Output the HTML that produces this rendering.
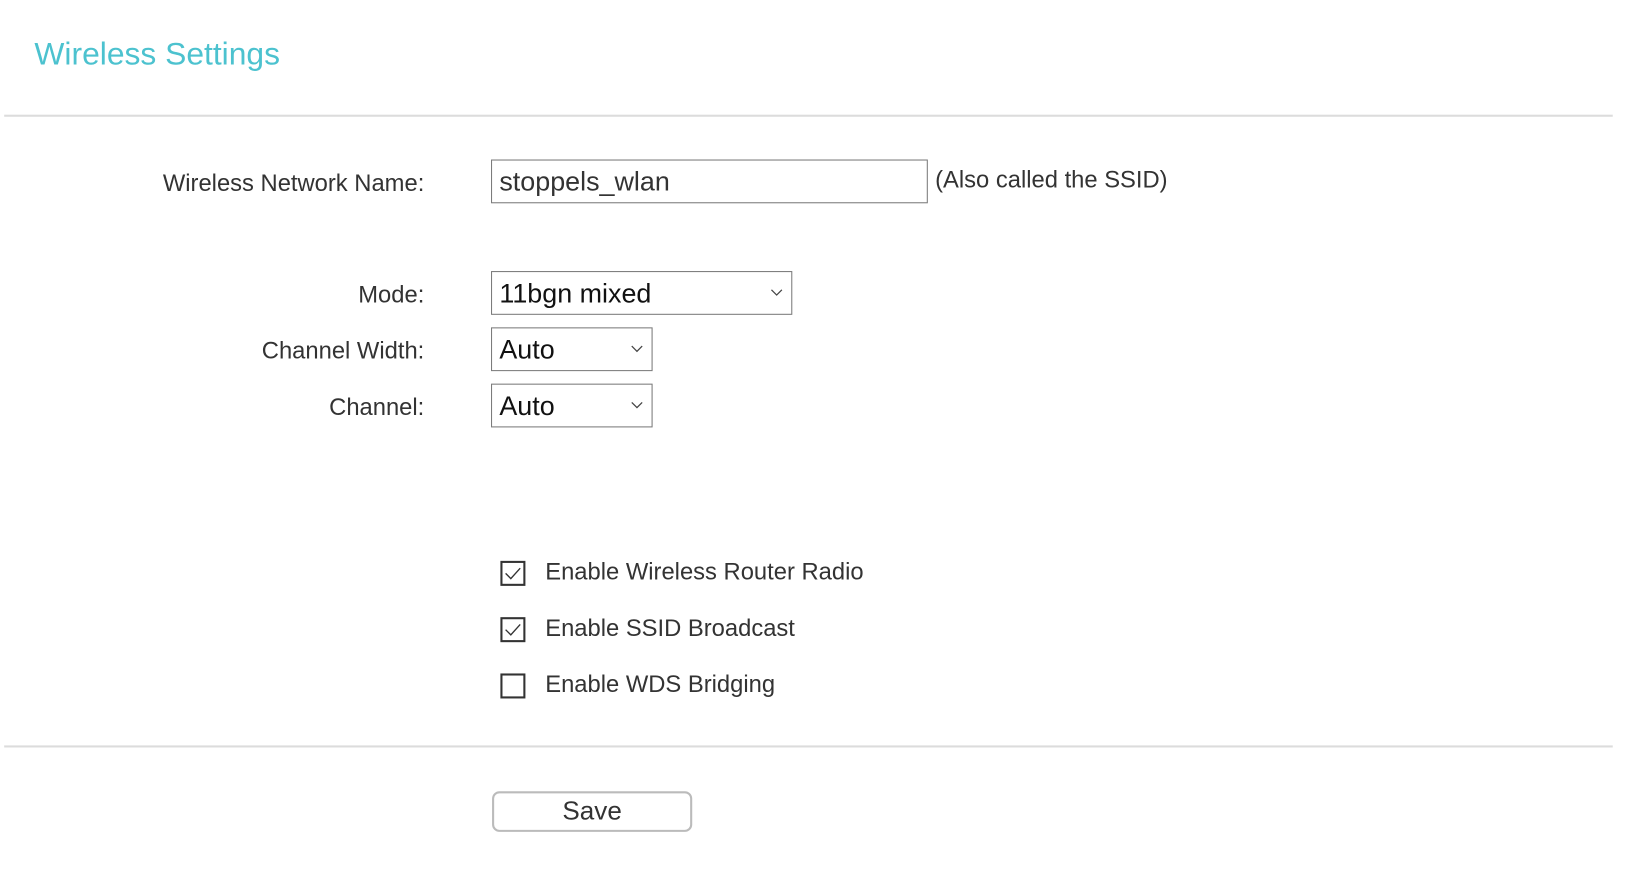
<!DOCTYPE html>
<html><head><style>
body{margin:0;width:1632px;height:880px;background:#fff;position:relative;font-family:"Liberation Sans",sans-serif;overflow:hidden}
#w{position:absolute;left:0;top:0;width:1550px;height:845px;transform:scale(1.0425);transform-origin:0 0}
.a{position:absolute}
.t{left:33px;top:35px;font-size:30.5px;color:#4cc2cf}
.hr{left:4px;width:1543px;height:2px;background:#dcdcdc}
.lbl{right:1143px;font-size:22.8px;color:#333;white-space:nowrap;text-align:right}
.box{border:1px solid #7a7a7a;box-sizing:border-box;background:#fff;font-size:25.8px;color:#111}
.box span{position:absolute;left:7px;top:50%;transform:translateY(-45%)}
.box svg{position:absolute;right:8px;top:50%;margin-top:-4px}
.cb{left:480px;width:24px;height:24px;border:2px solid #333;box-sizing:border-box}
.ct{left:523px;font-size:22.8px;color:#333}
</style></head><body><div id="w">
<div class="a t">Wireless Settings</div>
<div class="a hr" style="top:110px"></div>
<div class="a lbl" style="top:162px">Wireless Network Name:</div>
<div class="a box" style="left:471px;top:153px;width:419px;height:42px"><span style="color:#333">stoppels_wlan</span></div>
<div class="a" style="left:897px;top:159px;font-size:22.8px;color:#333">(Also called the SSID)</div>
<div class="a lbl" style="top:269px">Mode:</div>
<div class="a box" style="left:471px;top:260px;width:289px;height:42px"><span>11bgn mixed</span><svg width="12" height="8"><path d="M1 1L6 6L11 1" stroke="#444" fill="none" stroke-width="1.2"/></svg></div>
<div class="a lbl" style="top:323px">Channel Width:</div>
<div class="a box" style="left:471px;top:314px;width:155px;height:42px"><span>Auto</span><svg width="12" height="8"><path d="M1 1L6 6L11 1" stroke="#444" fill="none" stroke-width="1.2"/></svg></div>
<div class="a lbl" style="top:377px">Channel:</div>
<div class="a box" style="left:471px;top:368px;width:155px;height:42px"><span>Auto</span><svg width="12" height="8"><path d="M1 1L6 6L11 1" stroke="#444" fill="none" stroke-width="1.2"/></svg></div>
<div class="a cb" style="top:538px"><svg width="20" height="20" style="position:absolute;left:0;top:0"><path d="M3 10L8 15L17 5" stroke="#333" fill="none" stroke-width="1.3"/></svg></div>
<div class="a ct" style="top:535px">Enable Wireless Router Radio</div>
<div class="a cb" style="top:592px"><svg width="20" height="20" style="position:absolute;left:0;top:0"><path d="M3 10L8 15L17 5" stroke="#333" fill="none" stroke-width="1.3"/></svg></div>
<div class="a ct" style="top:589px">Enable SSID Broadcast</div>
<div class="a cb" style="top:646px"></div>
<div class="a ct" style="top:643px">Enable WDS Bridging</div>
<div class="a hr" style="top:715px"></div>
<div class="a" style="left:472px;top:759px;width:192px;height:39px;box-sizing:border-box;border:2px solid #bbb;border-radius:7px;background:#fff;text-align:center;line-height:35px;font-size:25px;color:#333">Save</div>
</div></body></html>
